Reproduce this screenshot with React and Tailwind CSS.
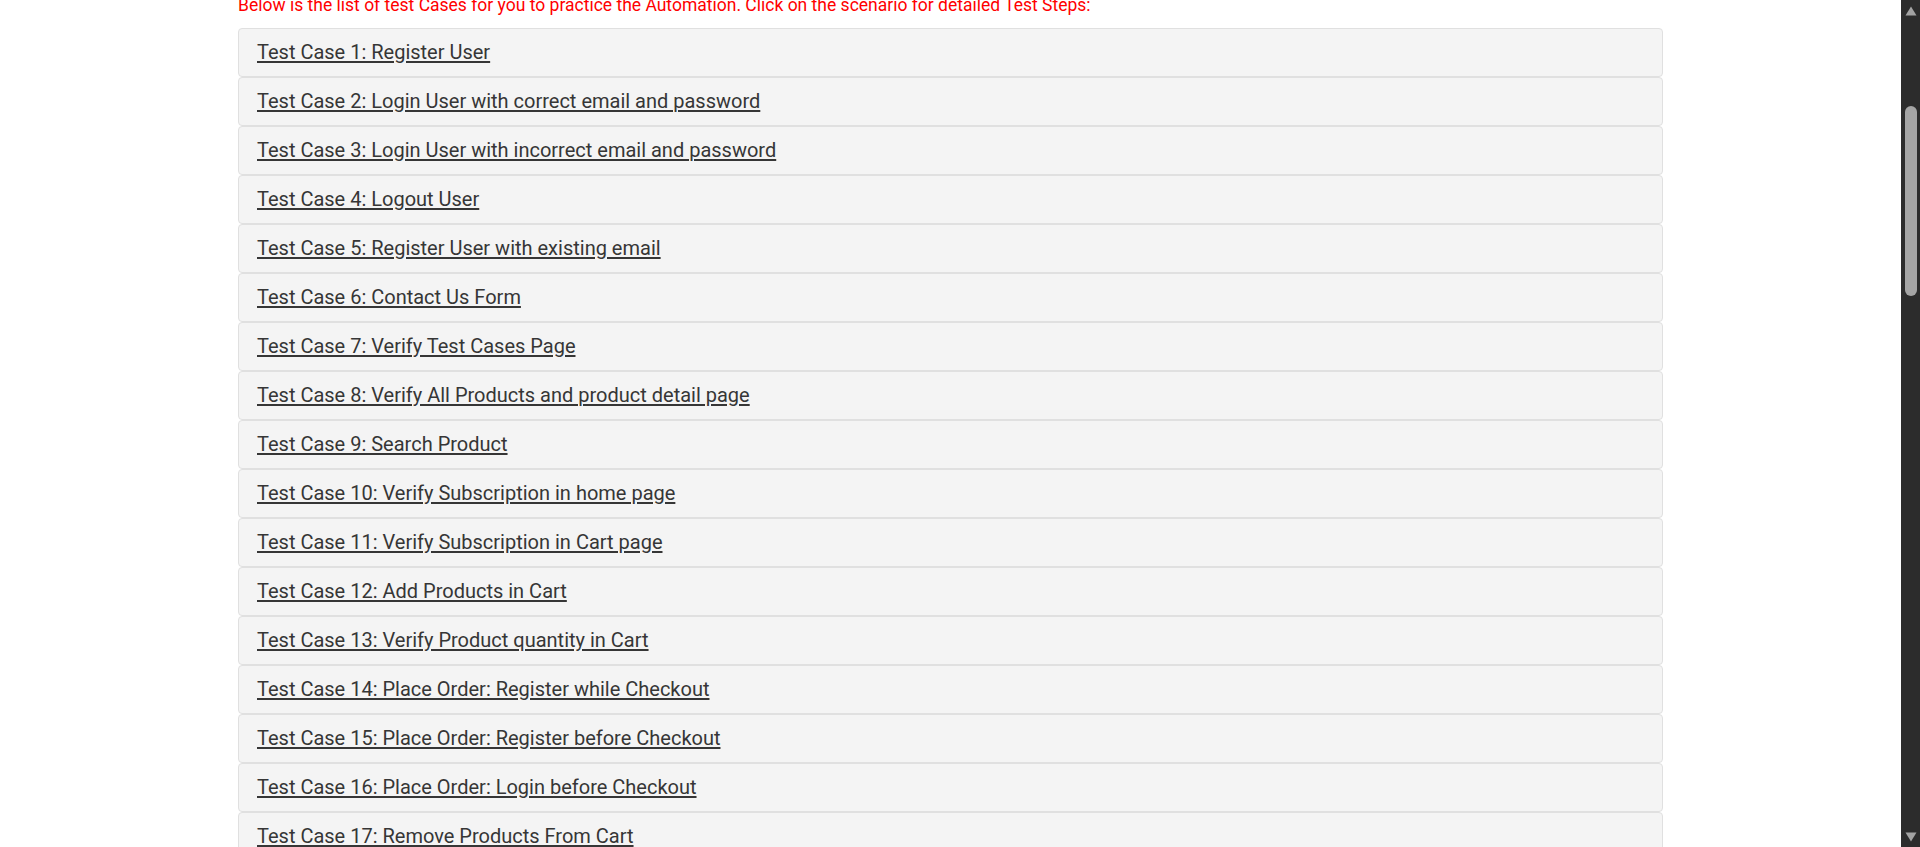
import React from "react";

const cases = [
  "Test Case 1: Register User",
  "Test Case 2: Login User with correct email and password",
  "Test Case 3: Login User with incorrect email and password",
  "Test Case 4: Logout User",
  "Test Case 5: Register User with existing email",
  "Test Case 6: Contact Us Form",
  "Test Case 7: Verify Test Cases Page",
  "Test Case 8: Verify All Products and product detail page",
  "Test Case 9: Search Product",
  "Test Case 10: Verify Subscription in home page",
  "Test Case 11: Verify Subscription in Cart page",
  "Test Case 12: Add Products in Cart",
  "Test Case 13: Verify Product quantity in Cart",
  "Test Case 14: Place Order: Register while Checkout",
  "Test Case 15: Place Order: Register before Checkout",
  "Test Case 16: Place Order: Login before Checkout",
  "Test Case 17: Remove Products From Cart",
  "Test Case 18: View Category Products",
];

export default function App() {
  return (
    <div
      className="flex h-[847px] w-[1920px] overflow-hidden bg-white"
      style={{ fontFamily: "Roboto, 'Liberation Sans', sans-serif" }}
    >
      <div className="flex-1 overflow-hidden">
        <div className="mx-auto w-[1425px] -mt-[6px]">
          <p className="m-0 whitespace-nowrap text-[17.5px] leading-[22px] text-[#ff0000]">
            Below is the list of test Cases for you to practice the Automation. Click on the scenario for detailed Test Steps:
          </p>
          <div className="mt-[12px] flex flex-col">
            {cases.map((c) => (
              <div
                key={c}
                className="flex h-[49px] items-center rounded-[4px] border border-[#e0e0e0] bg-[#f4f4f4] pb-[2px] pl-[18px]"
              >
                <a href="#" className="text-[20px] text-[#363636] underline underline-offset-[2px]">
                  {c}
                </a>
              </div>
            ))}
          </div>
        </div>
      </div>
      <div className="flex w-[19px] flex-col items-center bg-[#2c2c2c]">
        <svg width="12" height="10" viewBox="0 0 12 10" className="mt-[6px]">
          <path d="M6 0.5 L11.5 9.5 L0.5 9.5 Z" fill="#a3a3a3" />
        </svg>
        <div className="mt-[90px] h-[190px] w-[12px] rounded-full bg-[#a5a5a5]" />
        <div className="flex-1" />
        <svg width="12" height="10" viewBox="0 0 12 10" className="mb-[5px]">
          <path d="M0.5 0.5 L11.5 0.5 L6 9.5 Z" fill="#a3a3a3" />
        </svg>
      </div>
    </div>
  );
}
